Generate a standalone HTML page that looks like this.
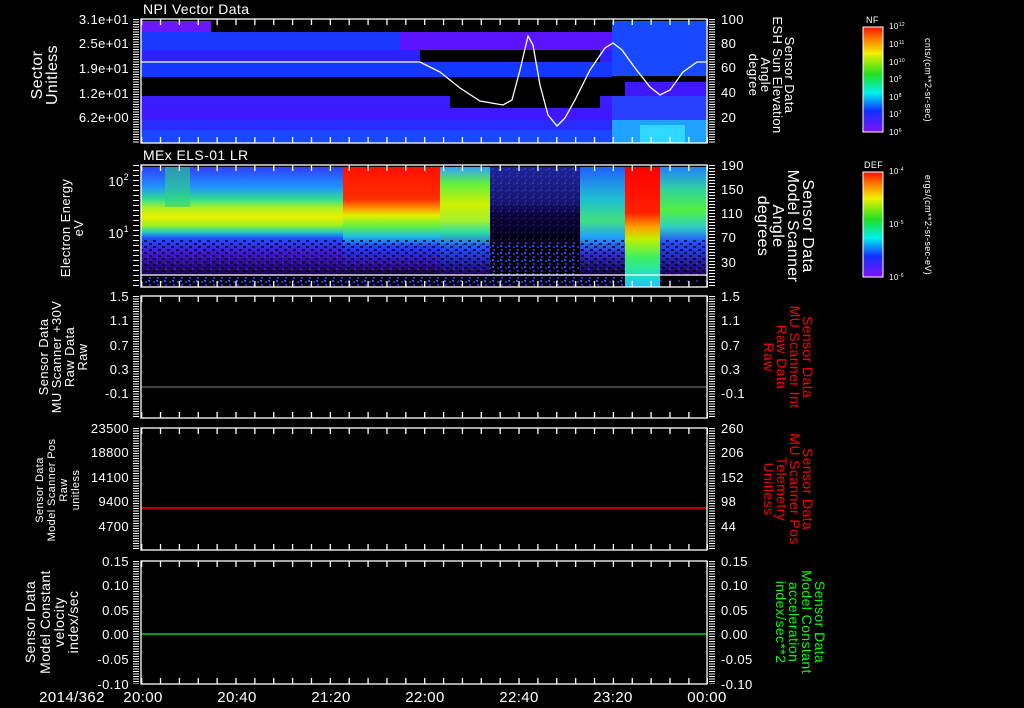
<!DOCTYPE html>
<html><head><meta charset="utf-8"><style>
html,body{margin:0;padding:0;background:#000;}
svg{display:block;}
text{font-family:"Liberation Sans",sans-serif;fill:#fff;letter-spacing:0.4px;}
</style></head><body>
<svg width="1024" height="708" viewBox="0 0 1024 708" xmlns="http://www.w3.org/2000/svg">
<defs>
<linearGradient id="cb" x1="0" y1="0" x2="0" y2="1">
<stop offset="0" stop-color="#ff1000"/><stop offset="0.12" stop-color="#ff8000"/><stop offset="0.25" stop-color="#f0f000"/><stop offset="0.45" stop-color="#20e020"/><stop offset="0.63" stop-color="#00f0f0"/><stop offset="0.8" stop-color="#1030ff"/><stop offset="1" stop-color="#8010ff"/></linearGradient>
<linearGradient id="gA" x1="0" y1="0" x2="0" y2="1">
<stop offset="0" stop-color="#3040ff"/><stop offset="0.18" stop-color="#2090ff"/><stop offset="0.3" stop-color="#30e090"/><stop offset="0.38" stop-color="#b0f020"/><stop offset="0.46" stop-color="#e8f000"/><stop offset="0.54" stop-color="#a0f020"/><stop offset="0.6" stop-color="#20d0c0"/><stop offset="0.66" stop-color="#2050ff"/><stop offset="0.8" stop-color="#4018d0"/><stop offset="1" stop-color="#180050"/></linearGradient>
<linearGradient id="gB" x1="0" y1="0" x2="0" y2="1">
<stop offset="0" stop-color="#ff1000"/><stop offset="0.3" stop-color="#ff3000"/><stop offset="0.38" stop-color="#ff9000"/><stop offset="0.45" stop-color="#e0f000"/><stop offset="0.55" stop-color="#60f040"/><stop offset="0.64" stop-color="#20c0e0"/><stop offset="0.74" stop-color="#2040ff"/><stop offset="0.9" stop-color="#3010a0"/><stop offset="1" stop-color="#100030"/></linearGradient>
<linearGradient id="gC" x1="0" y1="0" x2="0" y2="1">
<stop offset="0" stop-color="#30a0ff"/><stop offset="0.15" stop-color="#60f040"/><stop offset="0.35" stop-color="#d0f000"/><stop offset="0.5" stop-color="#a0f030"/><stop offset="0.6" stop-color="#30e0a0"/><stop offset="0.75" stop-color="#2050ff"/><stop offset="1" stop-color="#200060"/></linearGradient>
<linearGradient id="gD" x1="0" y1="0" x2="0" y2="1">
<stop offset="0" stop-color="#2830c0"/><stop offset="0.45" stop-color="#202090"/><stop offset="0.65" stop-color="#100040"/><stop offset="1" stop-color="#050010"/></linearGradient>
<linearGradient id="gE" x1="0" y1="0" x2="0" y2="1">
<stop offset="0" stop-color="#2060ff"/><stop offset="0.3" stop-color="#20c0d0"/><stop offset="0.5" stop-color="#40e080"/><stop offset="0.65" stop-color="#20a0ff"/><stop offset="0.8" stop-color="#3030d0"/><stop offset="1" stop-color="#100040"/></linearGradient>
<linearGradient id="gF" x1="0" y1="0" x2="0" y2="1">
<stop offset="0" stop-color="#ff0000"/><stop offset="0.38" stop-color="#ff2000"/><stop offset="0.5" stop-color="#ffa000"/><stop offset="0.6" stop-color="#c0f000"/><stop offset="0.75" stop-color="#40f060"/><stop offset="0.9" stop-color="#20e0c0"/><stop offset="1" stop-color="#20c0ff"/></linearGradient>
<linearGradient id="gG" x1="0" y1="0" x2="0" y2="1">
<stop offset="0" stop-color="#2080ff"/><stop offset="0.2" stop-color="#30d0a0"/><stop offset="0.4" stop-color="#50f040"/><stop offset="0.55" stop-color="#30d0c0"/><stop offset="0.7" stop-color="#2050ff"/><stop offset="1" stop-color="#200060"/></linearGradient>
<pattern id="nz" width="9" height="6" patternUnits="userSpaceOnUse">
<rect x="0" y="0" width="3" height="2" fill="#000"/><rect x="5" y="3" width="3" height="2" fill="#000"/><rect x="3" y="4" width="2" height="2" fill="#6010ff"/></pattern>
<pattern id="nz2" width="8" height="7" patternUnits="userSpaceOnUse">
<rect x="0" y="0" width="8" height="7" fill="#000"/><rect x="1" y="1" width="2" height="2" fill="#3020e0"/><rect x="5" y="4" width="2" height="2" fill="#5010ff"/><rect x="4" y="0" width="2" height="2" fill="#2060ff"/></pattern>
</defs>

<!-- Panel 1 -->
<rect x="141" y="20" width="566" height="123" fill="#000"/>
<rect x="141" y="21" width="70" height="11" fill="#6a18ff"/>
<rect x="141" y="32" width="471" height="18" fill="#1a38ff"/>
<rect x="400" y="32" width="212" height="18" fill="#5a14ff"/>
<rect x="141" y="50" width="471" height="12" fill="#2c20ff"/>
<rect x="420" y="50" width="180" height="12" fill="#000"/>
<rect x="141" y="62" width="471" height="15" fill="#1438ff"/>
<rect x="141" y="96" width="471" height="12" fill="#3a1cff"/>
<rect x="450" y="96" width="150" height="12" fill="#000"/>
<rect x="141" y="108" width="471" height="12" fill="#4018ff"/>
<rect x="141" y="120" width="471" height="10" fill="#2a2cff"/>
<rect x="141" y="130" width="471" height="13" fill="#1848ff"/>
<rect x="612" y="21" width="95" height="55" fill="#1848ff"/>
<rect x="612" y="76" width="95" height="20" fill="#000"/>
<rect x="625" y="82" width="82" height="14" fill="#4018ff"/>
<rect x="612" y="96" width="95" height="24" fill="#2a40ff"/>
<rect x="612" y="120" width="95" height="23" fill="#20a0ff"/>
<rect x="640" y="125" width="45" height="18" fill="#30d8ff"/>
<polyline fill="none" stroke="#fff" stroke-width="1.3" points="141,62 420,62 440,72 460,88 480,101 503,105 512,100 520,70 528,36 533,45 540,85 548,115 557,126 565,118 575,100 590,70 605,48 613,43 622,50 635,68 650,87 660,95 670,90 683,72 697,62 707,62"/>

<!-- Panel 2 -->
<rect x="141" y="167" width="202" height="108" fill="url(#gA)"/>
<rect x="165" y="167" width="25" height="40" fill="#30d080" opacity="0.6"/>
<rect x="343" y="167" width="97" height="108" fill="url(#gB)"/>
<rect x="440" y="167" width="50" height="108" fill="url(#gC)"/>
<rect x="490" y="167" width="90" height="120" fill="url(#nz2)"/>
<rect x="490" y="167" width="90" height="75" fill="url(#gD)" opacity="0.75"/>
<rect x="580" y="167" width="45" height="108" fill="url(#gE)"/>
<rect x="660" y="167" width="47" height="108" fill="url(#gG)"/>
<rect x="141" y="240" width="349" height="35" fill="url(#nz)" opacity="0.7"/>
<rect x="580" y="240" width="45" height="35" fill="url(#nz)" opacity="0.7"/>
<rect x="660" y="240" width="47" height="47" fill="url(#nz)" opacity="0.7"/>
<rect x="141" y="276" width="349" height="11" fill="url(#nz2)"/>
<rect x="580" y="276" width="45" height="11" fill="url(#nz2)"/>
<rect x="625" y="167" width="35" height="120" fill="url(#gF)"/>
<line x1="141" y1="275" x2="707" y2="275" stroke="#fff" stroke-width="1.3"/>

<!-- lines -->
<line x1="141" y1="387" x2="707" y2="387" stroke="#808080" stroke-width="1"/>
<line x1="141" y1="508" x2="707" y2="508" stroke="#ff0000" stroke-width="1.5"/>
<line x1="141" y1="634" x2="707" y2="634" stroke="#00ff00" stroke-width="1.2"/>

<!-- frames & ticks -->
<g stroke="#fff" fill="none" stroke-width="1.3">
<rect x="141" y="19" width="566" height="124"/>
<rect x="141" y="165" width="566" height="122"/>
<rect x="141" y="296" width="566" height="122"/>
<rect x="141" y="428" width="566" height="122"/>
<rect x="141" y="561" width="566" height="123"/>
</g>
<g stroke="#fff" stroke-width="6">
<line x1="136" y1="19" x2="136" y2="143" stroke-dasharray="1 1.5"/>
<line x1="712" y1="19" x2="712" y2="143" stroke-dasharray="1 1.5"/>
<line x1="136" y1="165" x2="136" y2="287" stroke-dasharray="1 4"/>
<line x1="712" y1="165" x2="712" y2="287" stroke-dasharray="1 2"/>
<line x1="136" y1="296" x2="136" y2="418" stroke-dasharray="1 1.5"/>
<line x1="712" y1="296" x2="712" y2="418" stroke-dasharray="1 1.5"/>
<line x1="136" y1="428" x2="136" y2="550" stroke-dasharray="1 1.5"/>
<line x1="712" y1="428" x2="712" y2="550" stroke-dasharray="1 1.5"/>
<line x1="136" y1="561" x2="136" y2="684" stroke-dasharray="1 1.5"/>
<line x1="712" y1="561" x2="712" y2="684" stroke-dasharray="1 1.5"/>
</g>
<g stroke="#fff" stroke-width="6" stroke-dasharray="1.3 17.57">
<line x1="141" y1="22" x2="708" y2="22"/><line x1="141" y1="140" x2="708" y2="140"/>
<line x1="141" y1="168" x2="708" y2="168"/><line x1="141" y1="284" x2="708" y2="284"/>
<line x1="141" y1="299" x2="708" y2="299"/><line x1="141" y1="415" x2="708" y2="415"/>
<line x1="141" y1="431" x2="708" y2="431"/><line x1="141" y1="547" x2="708" y2="547"/>
<line x1="141" y1="564" x2="708" y2="564"/><line x1="141" y1="681" x2="708" y2="681"/>
</g>

<!-- titles -->
<text x="143" y="14" font-size="14">NPI Vector Data</text>
<text x="143" y="160" font-size="14">MEx ELS-01 LR</text>

<!-- left axis labels -->
<g font-size="13" text-anchor="end">
<text x="129" y="24">3.1e+01</text><text x="129" y="48">2.5e+01</text><text x="129" y="73">1.9e+01</text><text x="129" y="98">1.2e+01</text><text x="129" y="122">6.2e+00</text>
<text x="129" y="186">10<tspan font-size="9" dy="-6">2</tspan></text><text x="129" y="238">10<tspan font-size="9" dy="-6">1</tspan></text>
<text x="129" y="301">1.5</text><text x="129" y="325">1.1</text><text x="129" y="350">0.7</text><text x="129" y="374">0.3</text><text x="129" y="398">-0.1</text>
<text x="129" y="433">23500</text><text x="129" y="457">18800</text><text x="129" y="482">14100</text><text x="129" y="506">9400</text><text x="129" y="531">4700</text>
<text x="129" y="566">0.15</text><text x="129" y="590">0.10</text><text x="129" y="615">0.05</text><text x="129" y="639">0.00</text><text x="129" y="664">-0.05</text><text x="129" y="689">-0.10</text>
</g>
<!-- right axis labels -->
<g font-size="13">
<text x="721" y="24">100</text><text x="721" y="48">80</text><text x="721" y="72">60</text><text x="721" y="97">40</text><text x="721" y="122">20</text>
<text x="721" y="170">190</text><text x="721" y="194">150</text><text x="721" y="218">110</text><text x="721" y="242">70</text><text x="721" y="267">30</text>
<text x="721" y="301">1.5</text><text x="721" y="325">1.1</text><text x="721" y="350">0.7</text><text x="721" y="374">0.3</text><text x="721" y="398">-0.1</text>
<text x="721" y="433">260</text><text x="721" y="457">206</text><text x="721" y="482">152</text><text x="721" y="506">98</text><text x="721" y="531">44</text>
<text x="721" y="566">0.15</text><text x="721" y="590">0.10</text><text x="721" y="615">0.05</text><text x="721" y="639">0.00</text><text x="721" y="664">-0.05</text><text x="721" y="689">-0.10</text>
</g>

<!-- left rotated titles -->
<g text-anchor="middle">
<text transform="translate(42,75) rotate(-90)" font-size="16">Sector</text>
<text transform="translate(57,75) rotate(-90)" font-size="16">Unitless</text>
<text transform="translate(70,228) rotate(-90)" font-size="13">Electron Energy</text>
<text transform="translate(83,228) rotate(-90)" font-size="13">eV</text>
<text transform="translate(48,357) rotate(-90)" font-size="13">Sensor Data</text>
<text transform="translate(61,357) rotate(-90)" font-size="13">MU Scanner +30V</text>
<text transform="translate(74,357) rotate(-90)" font-size="13">Raw Data</text>
<text transform="translate(87,357) rotate(-90)" font-size="13">Raw</text>
<text transform="translate(43,490) rotate(-90)" font-size="11">Sensor Data</text>
<text transform="translate(55,490) rotate(-90)" font-size="11">Model Scanner Pos</text>
<text transform="translate(67,490) rotate(-90)" font-size="11">Raw</text>
<text transform="translate(79,490) rotate(-90)" font-size="11">unitless</text>
<text transform="translate(35,622) rotate(-90)" font-size="14">Sensor Data</text>
<text transform="translate(50,622) rotate(-90)" font-size="14">Model Constant</text>
<text transform="translate(64,622) rotate(-90)" font-size="14">velocity</text>
<text transform="translate(78,622) rotate(-90)" font-size="14">index/sec</text>
</g>
<!-- right rotated titles -->
<g text-anchor="middle">
<text transform="translate(785,75) rotate(90)" font-size="13">Sensor Data</text>
<text transform="translate(773,75) rotate(90)" font-size="13">ESH Sun Elevation</text>
<text transform="translate(761,75) rotate(90)" font-size="13">Angle</text>
<text transform="translate(749,75) rotate(90)" font-size="13">degree</text>
<text transform="translate(803,226) rotate(90)" font-size="16">Sensor Data</text>
<text transform="translate(788,226) rotate(90)" font-size="16">Model Scanner</text>
<text transform="translate(773,226) rotate(90)" font-size="16">Angle</text>
<text transform="translate(758,226) rotate(90)" font-size="16">degrees</text>
<text transform="translate(803,357) rotate(90)" font-size="14" style="fill:#ff0000">Sensor Data</text>
<text transform="translate(790,357) rotate(90)" font-size="14" style="fill:#ff0000">MU Scanner Int</text>
<text transform="translate(777,357) rotate(90)" font-size="14" style="fill:#ff0000">Raw Data</text>
<text transform="translate(764,357) rotate(90)" font-size="14" style="fill:#ff0000">Raw</text>
<text transform="translate(803,489) rotate(90)" font-size="14" style="fill:#ff0000">Sensor Data</text>
<text transform="translate(790,489) rotate(90)" font-size="14" style="fill:#ff0000">MU Scanner Pos</text>
<text transform="translate(777,489) rotate(90)" font-size="14" style="fill:#ff0000">Telemetry</text>
<text transform="translate(764,489) rotate(90)" font-size="14" style="fill:#ff0000">Unitless</text>
<text transform="translate(815,622) rotate(90)" font-size="14" style="fill:#00ff00">Sensor Data</text>
<text transform="translate(802,622) rotate(90)" font-size="14" style="fill:#00ff00">Model Constant</text>
<text transform="translate(789,622) rotate(90)" font-size="14" style="fill:#00ff00">acceleration</text>
<text transform="translate(776,622) rotate(90)" font-size="14" style="fill:#00ff00">index/sec**2</text>
</g>

<!-- colorbars -->
<rect x="863" y="27" width="20" height="105" fill="url(#cb)" stroke="#fff" stroke-width="1"/>
<rect x="863" y="172" width="20" height="105" fill="url(#cb)" stroke="#fff" stroke-width="1"/>
<text x="866" y="23" font-size="9">NF</text>
<text x="864" y="168" font-size="9">DEF</text>
<g font-size="8">
<text x="889" y="29">10<tspan font-size="5" dy="-3">12</tspan></text>
<text x="889" y="47">10<tspan font-size="5" dy="-3">11</tspan></text>
<text x="889" y="65">10<tspan font-size="5" dy="-3">10</tspan></text>
<text x="889" y="82">10<tspan font-size="5" dy="-3">9</tspan></text>
<text x="889" y="100">10<tspan font-size="5" dy="-3">8</tspan></text>
<text x="889" y="117">10<tspan font-size="5" dy="-3">7</tspan></text>
<text x="889" y="135">10<tspan font-size="5" dy="-3">6</tspan></text>
<text x="889" y="174">10<tspan font-size="5" dy="-3">-4</tspan></text>
<text x="889" y="227">10<tspan font-size="5" dy="-3">-5</tspan></text>
<text x="889" y="280">10<tspan font-size="5" dy="-3">-6</tspan></text>
</g>
<text transform="translate(925,80) rotate(90)" font-size="9" text-anchor="middle">cnts/(cm**2-sr-sec)</text>
<text transform="translate(925,225) rotate(90)" font-size="9" text-anchor="middle">ergs/(cm**2-sr-sec-eV)</text>

<!-- time axis -->
<g font-size="15" text-anchor="middle">
<text x="72" y="702">2014/362</text>
<text x="143" y="702">20:00</text><text x="237" y="702">20:40</text><text x="331" y="702">21:20</text><text x="425" y="702">22:00</text><text x="519" y="702">22:40</text><text x="613" y="702">23:20</text><text x="707" y="702">00:00</text>
</g>
</svg>
</body></html>
